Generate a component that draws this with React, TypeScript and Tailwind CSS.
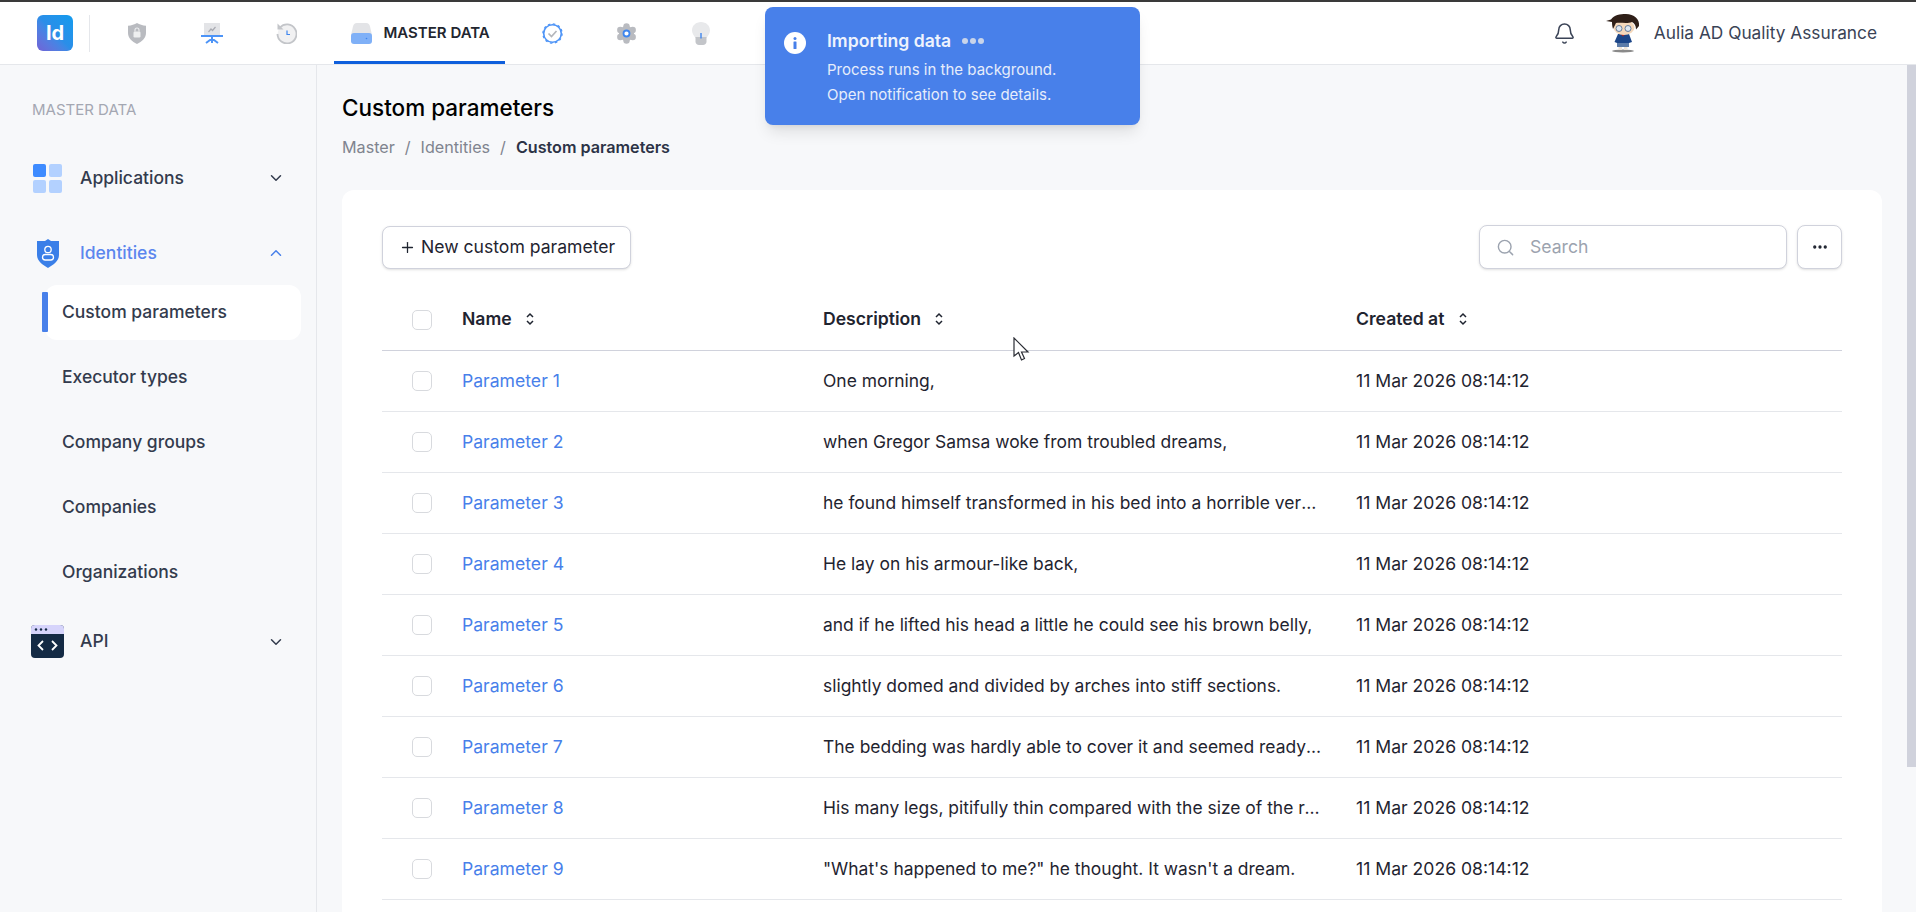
import React from 'react';
import { Bell, ChevronDown, ChevronUp, Ellipsis, Plus, Search } from 'lucide-react';

const rows = [
    'One morning,',
    'when Gregor Samsa woke from troubled dreams,',
    'he found himself transformed in his bed into a horrible vermin.',
    'He lay on his armour-like back,',
    'and if he lifted his head a little he could see his brown belly,',
    'slightly domed and divided by arches into stiff sections.',
    'The bedding was hardly able to cover it and seemed ready to slide off any moment.',
    'His many legs, pitifully thin compared with the size of the rest of him,',
    '"What\'s happened to me?" he thought. It wasn\'t a dream.',
];

const subItems = ['Custom parameters', 'Executor types', 'Company groups', 'Companies', 'Organizations'];

const ShieldIcon = () => (
    <svg width="18" height="21" viewBox="0 0 18 21">
        <path d="M9 0 C11.500 1.500 14.500 2.500 18 2.800 V10 C18 15 14 18.500 9 21 C4 18.500 0 15 0 10 V2.800 C3.500 2.500 6.500 1.500 9 0 Z" fill="#b9bbc0" />
        <rect x="5.500" y="8.500" width="7" height="6" rx="1.200" fill="#eeeff0" />
        <path d="M7 8.500 V7 a2 2 0 0 1 4 0 V8.500" stroke="#eeeff0" strokeWidth="1.100" fill="none" />
    </svg>
);

const PresentationIcon = () => (
    <svg width="22" height="21" viewBox="0 0 22 21">
        <rect x="3" y="0" width="16" height="12" fill="#e3e4e7" />
        <path d="M7.500 9 L10 6 L11.500 7.500 L14.500 4" stroke="#a9abb2" strokeWidth="1.200" fill="none" />
        <rect x="0" y="12" width="22" height="2" fill="#4d94f7" />
        <path d="M11 14 V20 M11 15.500 L5 20 M11 15.500 L17 20" stroke="#4d94f7" strokeWidth="2" fill="none" />
    </svg>
);

const HistoryIcon = () => (
    <svg width="21" height="21" viewBox="0 0 21 21">
        <circle cx="11" cy="11" r="9.500" fill="#f1f1f2" />
        <path d="M4 4.500 A9.500 9.500 0 1 1 1.500 11" stroke="#c3c5c9" strokeWidth="1.800" fill="none" />
        <path d="M1.500 0.500 V6.500 H7.500 Z" fill="#c3c5c9" />
        <path d="M11 7.500 V11.500 H14" stroke="#3f86ee" strokeWidth="1.200" fill="none" />
    </svg>
);

const DatabaseIcon = () => (
    <svg width="21" height="21" viewBox="0 0 21 21">
        <path d="M6 0 H15 C17.500 0 18.500 1.500 19 3.500 L21 12 H0 L2 3.500 C2.500 1.500 3.500 0 6 0 Z" fill="#e3e4e7" />
        <rect x="0" y="10" width="21" height="11" rx="3" fill="#7fb0f7" />
        <circle cx="15.500" cy="15.500" r="0.800" fill="#3f86ee" />
    </svg>
);

const BadgeIcon = () => (
    <svg width="21" height="21" viewBox="0 0 21 21">
        <circle cx="10.500" cy="10.500" r="8.800" fill="white" stroke="#4d94f7" strokeWidth="1.600" />
        <circle cx="10.500" cy="10.500" r="9.600" fill="none" stroke="#4d94f7" strokeWidth="1.300" strokeDasharray="2.500 2.530" />
        <path d="M6.500 10.500 L9.500 13.500 L14.500 8" stroke="#b4b6bb" strokeWidth="1.700" fill="none" />
    </svg>
);

const GearIcon = () => (
    <svg width="21" height="21" viewBox="0 0 21 21">
        <circle cx="10.500" cy="10.500" r="7.500" fill="#b9bbc0" />
        <circle cx="10.500" cy="3.500" r="3.200" fill="#b9bbc0" />
        <circle cx="10.500" cy="17.500" r="3.200" fill="#b9bbc0" />
        <circle cx="4.300" cy="7" r="3.200" fill="#b9bbc0" />
        <circle cx="16.700" cy="7" r="3.200" fill="#b9bbc0" />
        <circle cx="4.300" cy="14" r="3.200" fill="#b9bbc0" />
        <circle cx="16.700" cy="14" r="3.200" fill="#b9bbc0" />
        <circle cx="10.500" cy="10.500" r="3" fill="white" stroke="#3f86ee" strokeWidth="1.800" />
    </svg>
);

const BulbIcon = () => (
    <svg width="18" height="23" viewBox="0 0 18 23">
        <path d="M9 0 C14 0 18 3.500 18 8.500 C18 11.500 16 13.500 14.500 16 H3.500 C2 13.500 0 11.500 0 8.500 C0 3.500 4 0 9 0 Z" fill="#e8e9eb" />
        <path d="M3.500 15 H14.500 V19.500 C14.500 21.500 13 23 11 23 H7 C5 23 3.500 21.500 3.500 19.500 Z" fill="#c3c5c9" />
        <path d="M9 11 V16.500" stroke="#3f86ee" strokeWidth="1.400" />
    </svg>
);

const AppsIcon = () => (
    <div className="grid h-[29px] w-[29px] grid-cols-2 gap-[3px]">
        <div className="rounded-[2px] bg-[#3e8bff]" />
        <div className="rounded-[2px] bg-[#b3d1ff]" />
        <div className="rounded-[2px] bg-[#b3d1ff]" />
        <div className="rounded-[2px] bg-[#b3d1ff]" />
    </div>
);

const IdentityIcon = () => (
    <svg width="24" height="29" viewBox="0 0 24 29">
        <path d="M12 0 L15 2 H23 V16 C23 22 17 26 12 29 C7 26 1 22 1 16 V2 H9 Z" fill="#3a7fe8" />
        <circle cx="12" cy="10.500" r="3.200" fill="none" stroke="white" strokeWidth="1.300" />
        <rect x="6.500" y="15.500" width="11" height="5.500" rx="2.700" fill="none" stroke="white" strokeWidth="1.300" />
    </svg>
);

const ApiIcon = () => (
    <svg width="33" height="33" viewBox="0 0 33 33">
        <rect x="0" y="0" width="33" height="33" rx="4" fill="#142a44" />
        <path d="M0 9 V4 a4 4 0 0 1 4 -4 H29 a4 4 0 0 1 4 4 V9 Z" fill="#d6d4fb" />
        <circle cx="5" cy="4.500" r="1.200" fill="#142a44" />
        <circle cx="10" cy="4.500" r="1.200" fill="#142a44" />
        <circle cx="15" cy="4.500" r="1.200" fill="#142a44" />
        <path d="M12 16 L7.500 20.500 L12 25 M21 16 L25.500 20.500 L21 25" stroke="white" strokeWidth="1.800" fill="none" />
    </svg>
);

// small cartoon avatar
const Avatar = () => (
    <svg width="34" height="39" viewBox="0 0 34 39">
        <ellipse cx="17" cy="37" rx="11" ry="1.500" fill="#8a8a8a" />
        <rect x="12.500" y="31" width="3.500" height="5" fill="#efe5d8" />
        <rect x="18" y="31" width="3.500" height="5" fill="#efe5d8" />
        <path d="M12 20 H23 L26 28 L23 29 V31 H11 V29 L8.500 28 Z" fill="#1c4688" />
        <rect x="11" y="29" width="12" height="4" fill="#5d7ca8" />
        <path d="M14.500 20 H19.500 L17 22.500 Z" fill="#b52a22" />
        <ellipse cx="18" cy="13.500" rx="10.500" ry="7.500" fill="#f5d8bb" />
        <circle cx="13" cy="14.500" r="3" fill="#dfe8f2" stroke="#46648c" strokeWidth="0.800" />
        <circle cx="22" cy="14.500" r="3" fill="#dfe8f2" stroke="#46648c" strokeWidth="0.800" />
        <path d="M0 7 L5 5.500 C8 1 14 0 20 0 C28 0 34 5 33 12 L30 15.500 C30 11 28 9 26 8 C21 10 14 8 10 9 L7 15 C6 12 6 9 6 8 Z" fill="#2f1f18" />
    </svg>
);

const SortIcon = () => (
    <svg width="8" height="14" viewBox="0 0 8 14" className="shrink-0">
        <path d="M1 5 L4 2 L7 5 M1 9 L4 12 L7 9" stroke="#1f2430" strokeWidth="1.500" fill="none" />
    </svg>
);

const Checkbox = () => <div className="h-5 w-5 rounded-[5px] border border-[#d8dade] bg-white" />;

const Cursor = () => (
    <svg width="17" height="25" viewBox="0 0 17 25" className="absolute left-[1013px] top-[337px]">
        <path d="M1 1 V19 L5.500 15.500 L8.500 23 L11.500 21.500 L8.500 15 H15 Z" fill="white" stroke="#2a2d34" strokeWidth="1.200" />
    </svg>
);

const NavIcon: React.FC<{ children: React.ReactNode }> = ({ children }) => (
    <div className="flex h-[62px] w-[54px] items-center justify-center">{children}</div>
);

const SectionRow: React.FC<{
    icon: React.ReactNode;
    label: string;
    active?: boolean;
    className?: string;
}> = ({ icon, label, active = false, className = '' }) => (
    <div className={`flex items-center pl-[31px] pr-[28px] ${className}`}>
        <div className="mr-[16px] flex w-[33px] shrink-0 items-center justify-center">{icon}</div>
        <span className={`flex-1 text-[17.5px] font-medium ${active ? 'text-[#5b86ee]' : 'text-[#333b4d]'}`}>{label}</span>
        {active ? (
            <ChevronUp className="mr-[3px] h-[18px] w-[18px] text-[#4880ea]" />
        ) : (
            <ChevronDown className="mr-[3px] h-[18px] w-[18px] text-[#333b4d]" />
        )}
    </div>
);

export default function App() {
    return (
        <div className="relative flex h-[912px] w-[1916px] flex-col overflow-hidden bg-[#f7f8fa] text-[16px] [font-family:Inter,sans-serif]">
            <div className="h-[2px] shrink-0 bg-[#3a3a3a]" />

            <header className="flex h-[63px] shrink-0 items-center border-b border-[#e5e7eb] bg-white pl-[37px] pr-[39px]">
                <div className="flex h-9 w-9 items-center justify-center rounded-[6px] bg-gradient-to-bl from-[#0f9bee] via-[#2a8ee8] to-[#6f63d6] text-[20px] font-bold text-white">
                    Id
                </div>
                <div className="ml-4 mr-5 h-[37px] w-px bg-[#e5e7eb]" />
                <div className="flex items-center gap-[20.5px]">
                    <NavIcon><ShieldIcon /></NavIcon>
                    <NavIcon><PresentationIcon /></NavIcon>
                    <NavIcon><HistoryIcon /></NavIcon>
                    <div className="flex h-[62px] w-[171px] items-center gap-3 border-b-[3px] border-[#0f5fdc] pl-[17px] pt-[3px]">
                        <DatabaseIcon />
                        <span className="whitespace-nowrap text-[15px] font-semibold text-[#22262f]">MASTER DATA</span>
                    </div>
                    <NavIcon><BadgeIcon /></NavIcon>
                    <NavIcon><GearIcon /></NavIcon>
                    <NavIcon><BulbIcon /></NavIcon>
                </div>
                <div className="ml-auto flex items-center">
                    <Bell className="h-[23px] w-[23px] text-[#3a4356]" strokeWidth={1.6} />
                    <div className="ml-[30px] mr-[14px]"><Avatar /></div>
                    <span className="text-[17.3px] text-[#3a4356]">Aulia AD Quality Assurance</span>
                </div>
            </header>

            <div className="flex min-h-0 flex-1">
                <aside className="w-[317px] shrink-0 border-r border-[#e5e7eb] pt-[35px]">
                    <div className="pl-[32px] text-[15px] leading-[20px] text-[#a4a7b2]">MASTER DATA</div>
                    <SectionRow icon={<AppsIcon />} label="Applications" className="mt-[42px] h-[32px]" />
                    <SectionRow icon={<IdentityIcon />} label="Identities" active className="mt-[43px] h-[32px]" />
                    <div className="mt-[16px] flex flex-col">
                        {subItems.map((item, i) => (
                            <div
                                key={item}
                                className={`relative ml-[45px] mr-[15px] flex h-[55px] items-center pl-[17px] text-[17.5px] font-medium text-[#333b4d] ${i > 0 ? 'mt-[10px]' : 'rounded-[12px] bg-white'}`}
                            >
                                {i === 0 && <div className="absolute left-[-3px] top-[7px] h-[40px] w-[6px] rounded-[1px] bg-[#4880ea]" />}
                                {item}
                            </div>
                        ))}
                    </div>
                    <SectionRow icon={<ApiIcon />} label="API" className="mt-[25px] h-[33px]" />
                </aside>

                <main className="min-w-0 flex-1 overflow-hidden pl-[25px] pr-[25px]">
                    <h1 className="mt-[27px] text-[22.5px] font-medium leading-[32px] text-black">Custom parameters</h1>
                    <div className="mt-[11px] flex items-center text-[16.15px] leading-[24px] text-[#80848f]">
                        <span>Master</span>
                        <span className="mx-[10px]">/</span>
                        <span>Identities</span>
                        <span className="mx-[10px]">/</span>
                        <span className="font-semibold text-[#2c3346]">Custom parameters</span>
                    </div>

                    <section className="mt-[31px] h-[760px] rounded-t-[12px] bg-white px-10 pt-[35px]">
                        <div className="flex items-center justify-between">
                            <button className="flex h-[43px] items-center gap-[5px] rounded-[8px] border border-[#d0d2dc] bg-white pl-[16px] pr-[14.500px] text-[17.6px] text-[#1f2430] shadow-sm">
                                <Plus className="h-[17px] w-[17px]" strokeWidth={1.8} />
                                New custom parameter
                            </button>
                            <div className="flex items-center gap-[10px]">
                                <div className="flex h-[44px] w-[308px] items-center gap-[15px] rounded-[8px] border border-[#d0d2dc] bg-white pl-4 shadow-sm">
                                    <Search className="h-[19px] w-[19px] text-[#9ca3af]" strokeWidth={1.8} />
                                    <span className="text-[17.6px] text-[#9ca3af]">Search</span>
                                </div>
                                <div className="flex h-[44px] w-[45px] items-center justify-center rounded-[8px] border border-[#d0d2dc] bg-white shadow-sm">
                                    <Ellipsis className="h-[18px] w-[18px] text-[#1f2430]" strokeWidth={2.4} />
                                </div>
                            </div>
                        </div>

                        <div className="mt-[20px] grid h-[62px] grid-cols-[80px_361px_533px_1fr] items-center border-b border-[#d0d2dc] text-[17.6px] font-semibold text-[#1f2430]">
                            <div className="pl-[30px]"><Checkbox /></div>
                            <div className="flex items-center gap-[14px]">Name <SortIcon /></div>
                            <div className="flex items-center gap-[14px]">Description <SortIcon /></div>
                            <div className="flex items-center gap-[15px]">Created at <SortIcon /></div>
                        </div>

                        {rows.map((text, i) => (
                            <div
                                key={i}
                                className="grid h-[61px] grid-cols-[80px_361px_533px_1fr] items-center border-b border-[#e5e7eb] text-[17.6px] text-[#1f2430]"
                            >
                                <div className="pl-[30px]"><Checkbox /></div>
                                <div className="text-[#4880ea]">Parameter {i + 1}</div>
                                <div className="truncate pr-[31px] text-[17.45px]">{text}</div>
                                <div>11 Mar 2026 08:14:12</div>
                            </div>
                        ))}
                    </section>
                </main>

                <div className="w-[9px] shrink-0">
                    <div className="h-[702px] bg-[#d0d2dc]" />
                </div>
            </div>

            {/* import toast */}
            <div className="absolute left-[765px] top-[7px] flex h-[118px] w-[375px] rounded-[8px] bg-[#4880ea] pl-[19px] pt-[22px] text-white shadow-lg">
                <svg width="22" height="22" viewBox="0 0 22 22" className="mt-[3px] shrink-0">
                    <circle cx="11" cy="11" r="11" fill="white" />
                    <circle cx="11" cy="6.500" r="1.500" fill="#4880ea" />
                    <rect x="9.500" y="9.500" width="3" height="7.500" rx="0.500" fill="#4880ea" />
                </svg>
                <div className="ml-[21px]">
                    <div className="flex items-center text-[17.6px] font-semibold leading-[24px] text-[#eef3fd]">
                        Importing data
                        <span className="ml-[11px] flex gap-[2px]">
                            <span className="h-[6px] w-[6px] rounded-full bg-[#c9d4ea]" />
                            <span className="h-[6px] w-[6px] rounded-full bg-[#c9d4ea]" />
                            <span className="h-[6px] w-[6px] rounded-full bg-[#c9d4ea]" />
                        </span>
                    </div>
                    <div className="mt-[4px] text-[15px] leading-[25px] text-[#e6edfb]">Process runs in the background.</div>
                    <div className="text-[15px] leading-[25px] text-[#e6edfb]">Open notification to see details.</div>
                </div>
            </div>

            <Cursor />
        </div>
    );
}
